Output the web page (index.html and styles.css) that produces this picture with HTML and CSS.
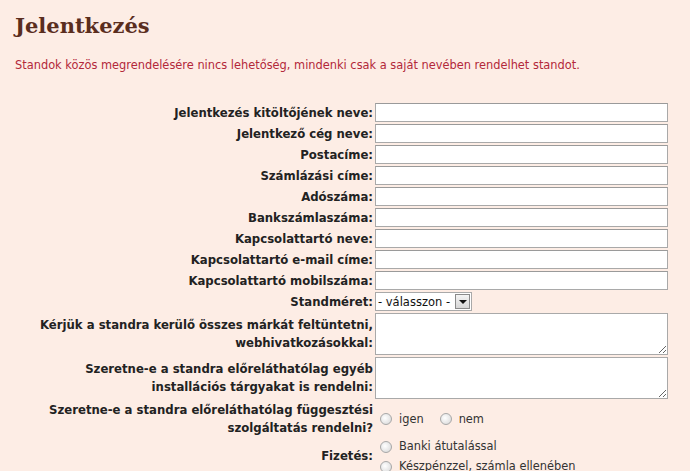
FILE: index.html
```html
<!DOCTYPE html>
<html lang="hu">
<head>
    <meta charset="UTF-8">
    <title>Jelentkezés</title>
    <link rel="stylesheet" href="styles.css">
</head>
<body>
    <div class="page">
        <h1>Jelentkezés</h1>
        <p class="notice">Standok közös megrendelésére nincs lehetőség, mindenki csak a saját nevében rendelhet standot.</p>
        <form class="signup">
            <label class="lbl" for="f1">Jelentkezés kitöltőjének neve:</label>
            <div class="fld"><input type="text" id="f1"></div>

            <label class="lbl" for="f2">Jelentkező cég neve:</label>
            <div class="fld"><input type="text" id="f2"></div>

            <label class="lbl" for="f3">Postacíme:</label>
            <div class="fld"><input type="text" id="f3"></div>

            <label class="lbl" for="f4">Számlázási címe:</label>
            <div class="fld"><input type="text" id="f4"></div>

            <label class="lbl" for="f5">Adószáma:</label>
            <div class="fld"><input type="text" id="f5"></div>

            <label class="lbl" for="f6">Bankszámlaszáma:</label>
            <div class="fld"><input type="text" id="f6"></div>

            <label class="lbl" for="f7">Kapcsolattartó neve:</label>
            <div class="fld"><input type="text" id="f7"></div>

            <label class="lbl" for="f8">Kapcsolattartó e-mail címe:</label>
            <div class="fld"><input type="text" id="f8"></div>

            <label class="lbl" for="f9">Kapcsolattartó mobilszáma:</label>
            <div class="fld"><input type="text" id="f9"></div>

            <label class="lbl" for="f10">Standméret:</label>
            <div class="fld">
                <div class="select-box">
                    <select id="f10">
                        <option>- válasszon -</option>
                    </select>
                    <span class="select-btn"></span>
                </div>
            </div>

            <label class="lbl" for="f11">Kérjük a standra kerülő összes márkát feltüntetni,<br>webhivatkozásokkal:</label>
            <div class="fld"><textarea id="f11"></textarea></div>

            <label class="lbl" for="f12">Szeretne-e a standra előreláthatólag egyéb<br>installációs tárgyakat is rendelni:</label>
            <div class="fld"><textarea id="f12"></textarea></div>

            <div class="lbl">Szeretne-e a standra előreláthatólag függesztési<br>szolgáltatás rendelni?</div>
            <div class="fld radios inline">
                <label><input type="radio" name="fugg"> igen</label>
                <label><input type="radio" name="fugg"> nem</label>
            </div>

            <div class="lbl">Fizetés:</div>
            <div class="fld radios">
                <label><input type="radio" name="fiz"> Banki átutalással</label>
                <label><input type="radio" name="fiz"> Készpénzzel, számla ellenében</label>
            </div>
        </form>
    </div>
</body>
</html>
```

FILE: styles.css
```css
body {
    margin: 0;
    background-color: #fdede5;
    font-family: 'DejaVu Sans', Verdana, sans-serif;
    font-size: 11.4px;
    color: #222222;
}
.page {
    padding: 12px 15px 0 15px;
}
h1 {
    margin: 0;
    font-family: 'DejaVu Serif', Georgia, serif;
    font-size: 21px;
    font-weight: bold;
    color: #5a2d1e; /* barna */
    line-height: 28px;
}
.notice {
    margin: 18px 0 0 0;
    color: #b3283a; /* piros */
    line-height: 14px;
}
.signup {
    display: grid;
    grid-template-columns: 348px 293px;
    column-gap: 2px;
    row-gap: 2px;
    margin: 31px 0 0 10px;
}
.lbl {
    display: flex;
    align-items: center;
    justify-content: flex-end;
    text-align: right;
    white-space: nowrap;
    font-size: 11.7px;
    font-weight: bold;
    line-height: 18px;
}
.fld {
    display: flex;
    align-items: center;
}
input[type="text"] {
    box-sizing: border-box;
    width: 293px;
    height: 19px;
    margin: 0;
    padding: 1px 2px;
    border: 1px solid #a9a9a9;
    border-top-color: #9a9a9a;
    background: #ffffff;
    font-family: inherit;
    font-size: 11px;
}
textarea {
    box-sizing: border-box;
    width: 293px;
    height: 42px;
    margin: 0;
    padding: 2px;
    border: 1px solid #a9a9a9;
    background: #ffffff;
    font-family: inherit;
    font-size: 11px;
}
.select-box {
    position: relative;
    width: 97px;
    height: 19px;
}
select {
    appearance: none;
    box-sizing: border-box;
    width: 97px;
    height: 19px;
    margin: 0;
    padding: 0 0 0 2px;
    border: 1px solid #a9a9a9;
    border-radius: 0;
    background: #ffffff;
    font-family: inherit;
    font-size: 11.5px;
    color: #111111;
}
.select-btn {
    position: absolute;
    top: 2px;
    right: 2px;
    width: 15px;
    height: 15px;
    box-sizing: border-box;
    border: 1px solid #8a8a8a;
    background: linear-gradient(#f4f4f4, #d6d6d6);
    pointer-events: none;
}
.select-btn::after {
    content: "";
    position: absolute;
    left: 3px;
    top: 5px;
    border-left: 4px solid transparent;
    border-right: 4px solid transparent;
    border-top: 4px solid #111111;
}
.radios {
    flex-direction: column;
    align-items: flex-start;
    justify-content: center;
    gap: 7px;
    padding-top: 1px;
}
.radios.inline {
    flex-direction: row;
    align-items: center;
    justify-content: flex-start;
    gap: 11px;
    padding-top: 0;
}
.radios label {
    display: flex;
    align-items: center;
    gap: 7px;
    color: #333333;
    line-height: 13px;
}
input[type="radio"] {
    appearance: none;
    width: 12px;
    height: 12px;
    margin: 0 0 0 5px;
    border: 1px solid #a8a8a8;
    border-radius: 50%;
    background: radial-gradient(circle at 40% 40%, #ffffff 0, #e6e6e6 60%, #cfcfcf 100%);
}
```
